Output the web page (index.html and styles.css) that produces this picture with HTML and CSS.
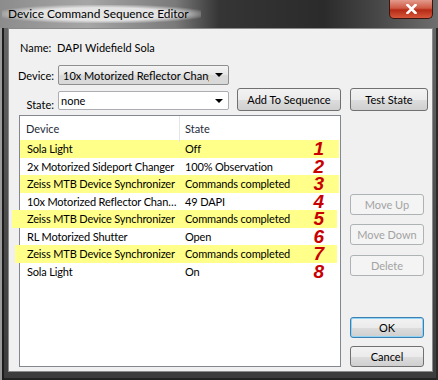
FILE: index.html
```html
<!DOCTYPE html>
<html>
<head>
  <title>Device Command Sequence Editor</title>
  <link rel="stylesheet" href="styles.css">
</head>
<body>
  <div class="window">
    <div class="titlebar">
      <span class="title">Device Command Sequence Editor</span>
      <span class="close">
        <svg width="11" height="10" viewBox="0 0 11 10"><path d="M1.5 1 L9.5 9 M9.5 1 L1.5 9" stroke="#fff" stroke-width="2.6" stroke-linecap="square"/></svg>
      </span>
    </div>
    <div class="client">
      <div class="name-row">Name:&nbsp; DAPI Widefield Sola</div>

      <div class="field-row">
        <span class="field-label">Device:</span>
        <div class="combo combo-drop">
          <span class="combo-text">10x Motorized Reflector Changer</span>
          <span class="arrow"></span>
        </div>
      </div>

      <div class="field-row state-row">
        <span class="field-label">State:</span>
        <div class="combo combo-edit">
          <span class="combo-text">none</span>
          <span class="arrow"></span>
        </div>
        <button class="btn btn-add">Add To Sequence</button>
        <button class="btn btn-test">Test State</button>
      </div>

      <div class="main">
        <div class="list">
          <div class="list-head">
            <span class="head-dev">Device</span>
            <span class="head-st">State</span>
          </div>
          <div class="row hl"><span class="dev">Sola Light</span><span class="st">Off</span><span class="num">1</span></div>
          <div class="row"><span class="dev">2x Motorized Sideport Changer</span><span class="st">100% Observation</span><span class="num">2</span></div>
          <div class="row hl"><span class="dev">Zeiss MTB Device Synchronizer</span><span class="st">Commands completed</span><span class="num">3</span></div>
          <div class="row"><span class="dev">10x Motorized Reflector Changer</span><span class="st">49 DAPI</span><span class="num">4</span></div>
          <div class="row hl hl-far"><span class="dev">Zeiss MTB Device Synchronizer</span><span class="st">Commands completed</span><span class="num">5</span></div>
          <div class="row"><span class="dev">RL Motorized Shutter</span><span class="st">Open</span><span class="num">6</span></div>
          <div class="row hl hl-near"><span class="dev">Zeiss MTB Device Synchronizer</span><span class="st">Commands completed</span><span class="num">7</span></div>
          <div class="row"><span class="dev">Sola Light</span><span class="st">On</span><span class="num">8</span></div>
        </div>

        <div class="side">
          <button class="btn side-btn off btn-up">Move Up</button>
          <button class="btn side-btn off btn-down">Move Down</button>
          <button class="btn side-btn off btn-del">Delete</button>
          <button class="btn side-btn btn-ok">OK</button>
          <button class="btn side-btn btn-cancel">Cancel</button>
        </div>
      </div>
    </div>
  </div>
</body>
</html>
```

FILE: styles.css
```css
body {
  margin: 0;
  font-family: Lato, "Open Sans", sans-serif;
  font-size: 11px;
  color: #000;
}
.window {
  width: 438px;
  height: 380px;
  display: flex;
  flex-direction: column;
  background: linear-gradient(#6a6a6a, #4a4a4a 60%, #3c3c3c);
  box-shadow: inset 2px 0 #9a9a9a, inset 4px 0 #1c1c1c, inset -2px 0 #2a2a2a, inset 0 -2px #222;
}
.titlebar {
  height: 28px;
  display: flex;
  align-items: flex-start;
  background: linear-gradient(to right, #8c8c8c 0%, #a6a6a6 20%, #7a7a7a 40%, #353535 50%, #2b2b2b 74%, #474747 86%, #6e6e6e 100%);
}
.title {
  margin: 5px 0 0 2px;
  padding: 0 12px 0 6px;
  height: 18px;
  line-height: 18px;
  font-size: 11.9px;
  background: radial-gradient(ellipse at center, rgba(232, 232, 232, 0.95) 50%, rgba(232, 232, 232, 0) 78%);
}
.close {
  margin-left: auto;
  margin-right: 5px;
  width: 44px;
  height: 19px;
  box-sizing: border-box;
  border: 1px solid #3c1510;
  border-top: none;
  border-radius: 0 0 5px 5px;
  background: linear-gradient(#e39a8c, #cf5a45 45%, #b52a15 55%, #d6573b);
  display: flex;
  align-items: center;
  justify-content: center;
}
.client {
  flex: 1;
  margin: 0 5px 8px 8px;
  padding: 11px 0 0 9px;
  background-color: #f0f0f0;
  border: 1px solid #8a8a8a;
}
.name-row {
  height: 16px;
  line-height: 16px;
  margin-left: 2px;
}
.field-row {
  display: flex;
  align-items: center;
  height: 20px;
  margin-top: 9px;
}
.field-label {
  width: 36px;
  margin-right: 4px;
  text-align: right;
}
.combo {
  width: 171px;
  height: 20px;
  box-sizing: border-box;
  border: 1px solid #9c9c9c;
  border-radius: 2px;
  display: flex;
  align-items: center;
  padding-left: 4px;
}
.combo-drop {
  background: linear-gradient(#f4f4f4, #e6e6e6 50%, #dadada 51%, #d8d8d8);
  border-color: #8e8f8f;
}
.combo-edit {
  height: 19px;
  margin-bottom: 1px;
  background-color: #fff;
  border-color: #abadb3;
  padding-left: 2px;
}
.combo-text {
  width: 146px;
  overflow: hidden;
  white-space: nowrap;
}
.arrow {
  margin-left: auto;
  margin-right: 5px;
  width: 0;
  border-left: 4px solid transparent;
  border-right: 4px solid transparent;
  border-top: 4px solid #000;
}
.state-row {
  height: 23px;
  margin-top: 3px;
  align-items: flex-end;
}
.btn {
  height: 23px;
  box-sizing: border-box;
  padding: 0;
  border: 1px solid #707070;
  border-radius: 3px;
  background: linear-gradient(#f2f2f2, #ebebeb 50%, #dddddd 51%, #cfcfcf);
  font: inherit;
  color: #000;
}
.btn-add {
  width: 104px;
  margin-left: 8px;
}
.btn-test {
  width: 78px;
  margin-left: 9px;
}
.main {
  display: flex;
  margin-top: 4px;
}
.list {
  width: 322px;
  height: 252px;
  box-sizing: border-box;
  margin-left: 1px;
  border: 1px solid #828790;
  background-color: #fff;
}
.list-head {
  display: grid;
  grid-template-columns: 160px 1fr;
  height: 24px;
  line-height: 26px;
  color: #1e2b3b;
}
.head-dev {
  padding-left: 6px;
  border-right: 1px solid #e3e5e8;
}
.head-st {
  padding-left: 5px;
}
.row {
  display: grid;
  grid-template-columns: 160px 1fr 30px;
  height: 17.5px;
  line-height: 17.5px;
  margin-right: 1px;
  letter-spacing: -0.15px;
}
.dev {
  padding: 0 2px 0 7px;
  white-space: nowrap;
  overflow: hidden;
  text-overflow: ellipsis;
}
.st {
  padding-left: 5px;
  white-space: nowrap;
}
.num {
  padding-right: 15px;
  text-align: right;
  font: italic bold 19px "Liberation Sans", Arial, sans-serif;
  line-height: 17.5px;
  letter-spacing: 0;
  color: #c80000;
}
.hl {
  background-color: #ffff8a;
}
.hl-far {
  margin-left: -8px;
  padding-left: 8px;
  margin-right: 3px;
}
.hl-near {
  margin-left: -5px;
  padding-left: 5px;
  margin-right: 3px;
}
.hl-far .num,
.hl-near .num {
  padding-right: 13px;
}
.side {
  display: flex;
  flex-direction: column;
  width: 74px;
  margin-left: 9px;
}
.side-btn {
  height: 21px;
}
.off {
  color: #a3a3a3;
  border-color: #adb2b5;
  background: #f4f4f4;
}
.btn-up {
  margin-top: 79px;
}
.btn-down {
  margin-top: 9px;
}
.btn-del {
  margin-top: 10px;
}
.btn-ok {
  margin-top: auto;
  border-color: #3c7fb1;
  box-shadow: inset 0 0 0 1px #8fd3f5;
}
.btn-cancel {
  margin-top: 8px;
}
```
